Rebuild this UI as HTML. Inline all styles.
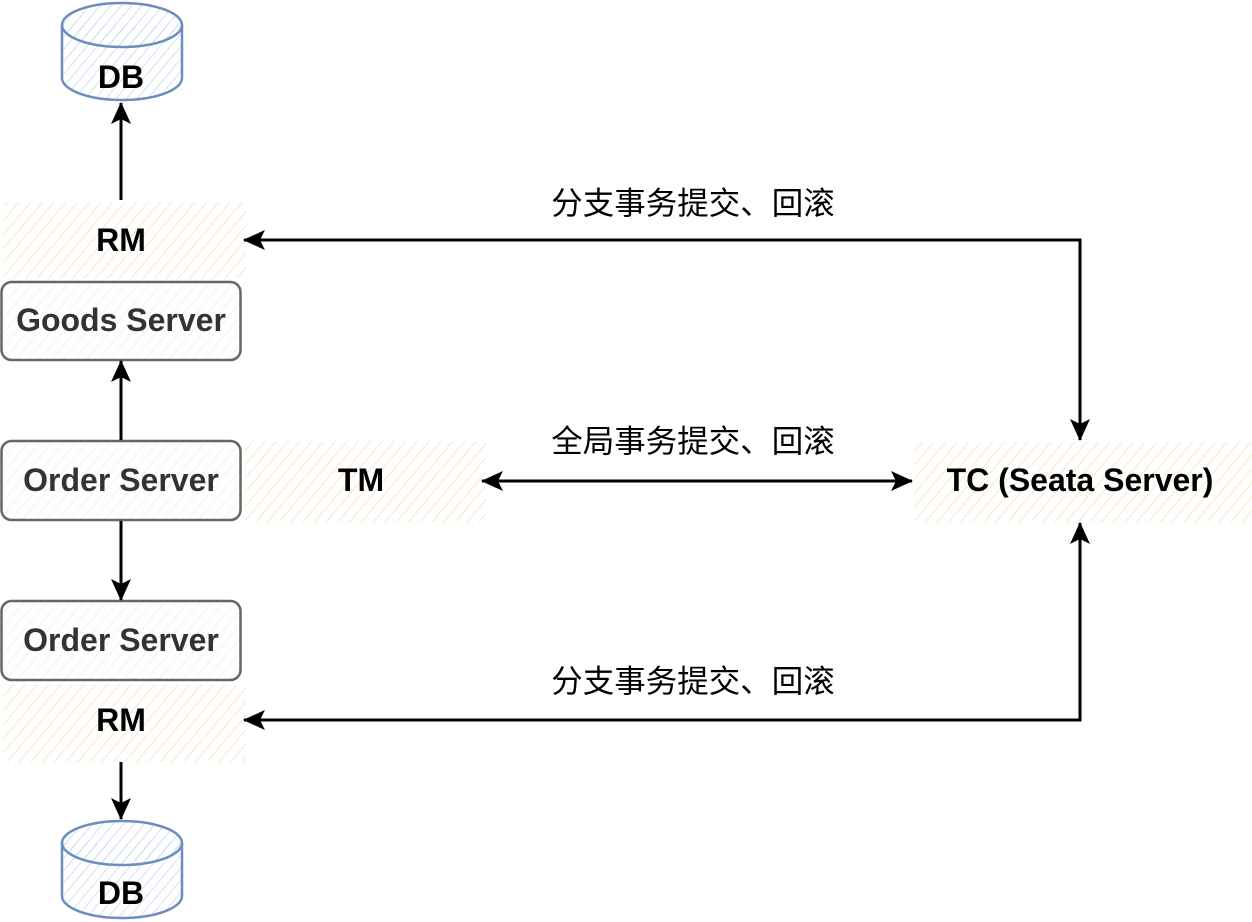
<!DOCTYPE html>
<html><head><meta charset="utf-8"><style>
html,body{margin:0;padding:0;background:#fff;}
svg{display:block;}
.b{font-family:"Liberation Sans",sans-serif;font-weight:bold;font-size:32px;text-anchor:middle;}
.c{font-family:"Liberation Sans","Noto Sans CJK SC",sans-serif;font-size:31.5px;text-anchor:middle;fill:#000;}
</style></head><body>
<svg width="1252" height="922" viewBox="0 0 1252 922" xmlns="http://www.w3.org/2000/svg">
<defs>
<pattern id="ho" width="9" height="9" patternUnits="userSpaceOnUse" patternTransform="rotate(40)">
<line x1="0" y1="0" x2="0" y2="9" stroke="#fbdcb8" stroke-width="1.5"/>
</pattern>
<pattern id="hg" width="9" height="9" patternUnits="userSpaceOnUse" patternTransform="rotate(40)">
<line x1="0" y1="0" x2="0" y2="9" stroke="#eeeeee" stroke-width="1.5"/>
</pattern>
<pattern id="hb" width="8" height="8" patternUnits="userSpaceOnUse" patternTransform="rotate(40)">
<line x1="0" y1="0" x2="0" y2="8" stroke="#c6d6ec" stroke-width="1.5"/>
</pattern>
<marker id="a" markerWidth="22" markerHeight="20" refX="21" refY="10" orient="auto" markerUnits="userSpaceOnUse" viewBox="0 0 22 20">
<path d="M0,0 L22,10 L0,20 L5,10 Z" fill="#000"/>
</marker>
<marker id="as" markerWidth="22" markerHeight="20" refX="1" refY="10" orient="auto" markerUnits="userSpaceOnUse" viewBox="0 0 22 20">
<path d="M22,0 L0,10 L22,20 L17,10 Z" fill="#000"/>
</marker>
</defs>
<path d="M62,25 L62,78 A60,22 0 0 0 182,78 L182,25" fill="url(#hb)" stroke="#6c8ebf" stroke-width="2.5"/>
<ellipse cx="122" cy="25" rx="60" ry="22" fill="url(#hb)" stroke="#6c8ebf" stroke-width="2.5"/>
<text class="b" x="121" y="88">DB</text>
<path d="M62,843 L62,896 A60,22 0 0 0 182,896 L182,843" fill="url(#hb)" stroke="#6c8ebf" stroke-width="2.5"/>
<ellipse cx="122" cy="843" rx="60" ry="22" fill="url(#hb)" stroke="#6c8ebf" stroke-width="2.5"/>
<text class="b" x="121" y="904">DB</text>

<rect x="4" y="202" width="242" height="77" fill="url(#ho)"/>
<rect x="4" y="684" width="242" height="78" fill="url(#ho)"/>
<rect x="245" y="441" width="241" height="81" fill="url(#ho)"/>
<rect x="914" y="442" width="338" height="80" fill="url(#ho)"/>
<text class="b" x="121" y="251">RM</text>
<text class="b" x="121" y="731">RM</text>
<text class="b" x="361" y="491">TM</text>
<text class="b" x="1080" y="491">TC (Seata Server)</text>

<rect x="1.5" y="282" width="239" height="78" rx="10" fill="url(#hg)" stroke="#666" stroke-width="2.5"/>
<rect x="1.5" y="441" width="239" height="79" rx="10" fill="url(#hg)" stroke="#666" stroke-width="2.5"/>
<rect x="1.5" y="601" width="239" height="79" rx="10" fill="url(#hg)" stroke="#666" stroke-width="2.5"/>
<text class="b" x="121" y="331" fill="#333">Goods Server</text>
<text class="b" x="121" y="491" fill="#333">Order Server</text>
<text class="b" x="121" y="651" fill="#333">Order Server</text>

<g stroke="#000" stroke-width="3" fill="none">
<line x1="121" y1="200" x2="121" y2="103" marker-end="url(#a)"/>
<line x1="121" y1="440" x2="121" y2="361" marker-end="url(#a)"/>
<line x1="121" y1="521" x2="121" y2="600" marker-end="url(#a)"/>
<line x1="121" y1="762" x2="121" y2="819" marker-end="url(#a)"/>
<path d="M244,240 L1080,240 L1080,440" marker-end="url(#a)" marker-start="url(#as)"/>
<path d="M244,720 L1080,720 L1080,523" marker-end="url(#a)" marker-start="url(#as)"/>
<line x1="482" y1="481" x2="912" y2="481" marker-end="url(#a)" marker-start="url(#as)"/>
</g>
<text class="c" x="693" y="214">分支事务提交、回滚</text>
<text class="c" x="693" y="452">全局事务提交、回滚</text>
<text class="c" x="693" y="692">分支事务提交、回滚</text>
</svg>
</body></html>
